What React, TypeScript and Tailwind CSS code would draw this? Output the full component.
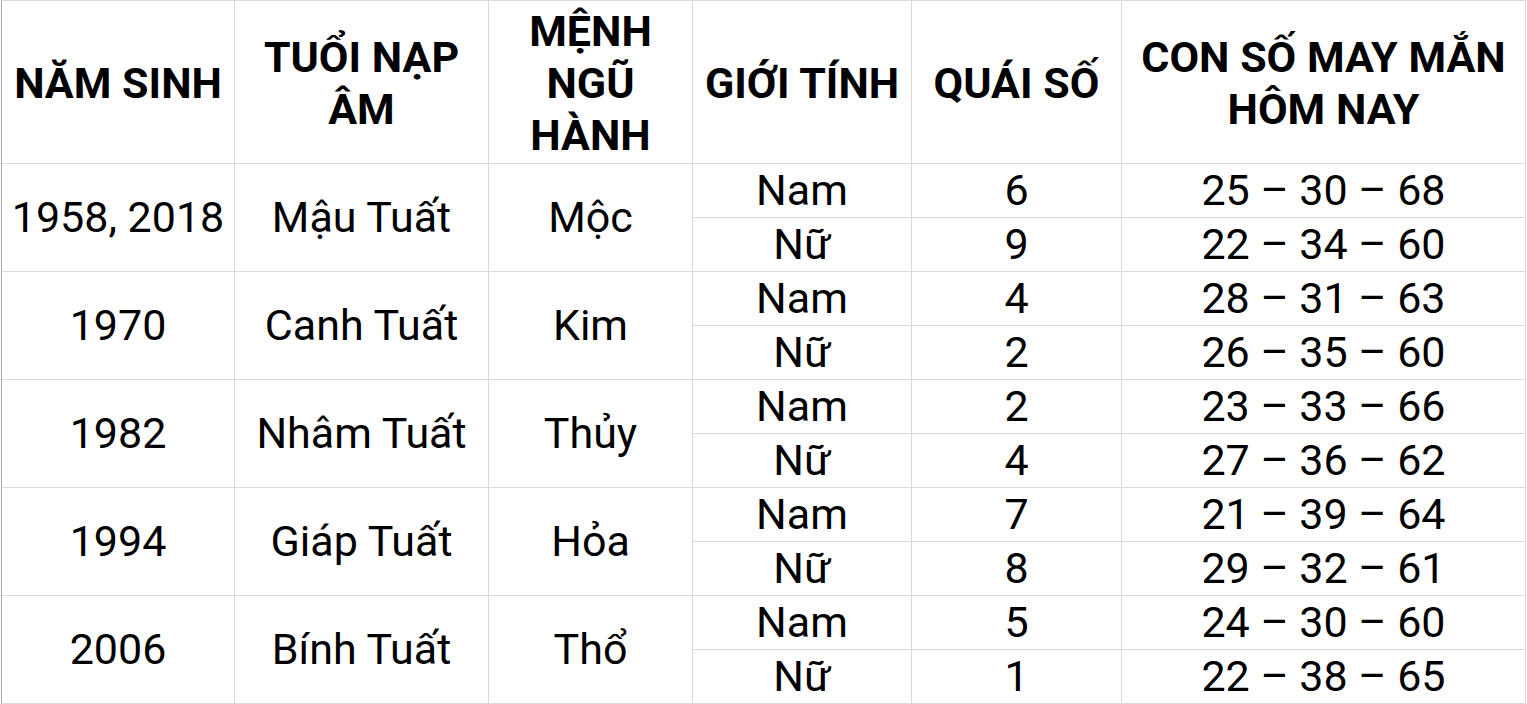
import React from "react";

const groups = [
  { year: "1958, 2018", tuoi: "Mậu Tuất", menh: "Mộc", rows: [["Nam", "6", "25 – 30 – 68"], ["Nữ", "9", "22 – 34 – 60"]] },
  { year: "1970", tuoi: "Canh Tuất", menh: "Kim", rows: [["Nam", "4", "28 – 31 – 63"], ["Nữ", "2", "26 – 35 – 60"]] },
  { year: "1982", tuoi: "Nhâm Tuất", menh: "Thủy", rows: [["Nam", "2", "23 – 33 – 66"], ["Nữ", "4", "27 – 36 – 62"]] },
  { year: "1994", tuoi: "Giáp Tuất", menh: "Hỏa", rows: [["Nam", "7", "21 – 39 – 64"], ["Nữ", "8", "29 – 32 – 61"]] },
  { year: "2006", tuoi: "Bính Tuất", menh: "Thổ", rows: [["Nam", "5", "24 – 30 – 60"], ["Nữ", "1", "22 – 38 – 65"]] },
];

const cell = "flex items-center justify-center text-center border-r border-b border-[#dadada] bg-white";
const head = `${cell} text-[43px] font-bold leading-[52px] pt-[2px]`;
const body = `${cell} text-[43px]`;

export default function App() {
  return (
    <div className="w-[1527px] h-[704px] bg-white pl-px overflow-hidden text-black" style={{ fontFamily: "Roboto, 'Noto Sans', sans-serif" }}>
      <div className="grid grid-cols-[233px_254px_204px_219px_210px_404px] grid-rows-[163px_repeat(10,54px)] w-[1525px] border-l border-l-[#a8a8a8] border-t border-t-[#dadada]">
        <div className={head}>NĂM SINH</div>
        <div className={head}>TUỔI NẠP<br />ÂM</div>
        <div className={head}>MỆNH<br />NGŨ<br />HÀNH</div>
        <div className={head}>GIỚI TÍNH</div>
        <div className={head}>QUÁI SỐ</div>
        <div className={head}>CON SỐ MAY MẮN<br />HÔM NAY</div>
        {groups.map((g) => (
          <React.Fragment key={g.year}>
            <div className={`${body} row-span-2`}>{g.year}</div>
            <div className={`${body} row-span-2`}>{g.tuoi}</div>
            <div className={`${body} row-span-2`}>{g.menh}</div>
            {g.rows.map((r, i) => (
              <React.Fragment key={i}>
                <div className={`${body} ${i === 1 ? "col-start-4" : ""}`}>{r[0]}</div>
                <div className={body}>{r[1]}</div>
                <div className={body}>{r[2]}</div>
              </React.Fragment>
            ))}
          </React.Fragment>
        ))}
      </div>
    </div>
  );
}
